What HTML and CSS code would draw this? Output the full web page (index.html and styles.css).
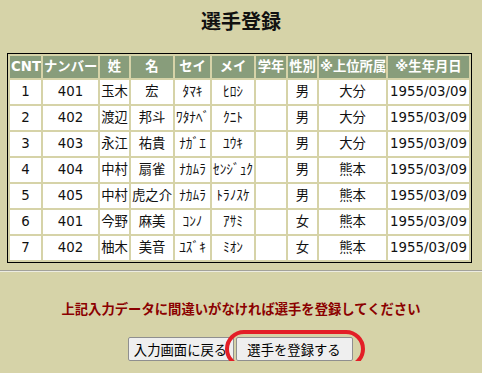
FILE: index.html
```html
<!DOCTYPE html>
<html lang="ja">
<head>
    <meta charset="UTF-8">
    <title>選手登録</title>
    <link rel="stylesheet" href="styles.css">
</head>
<body>

<!-- Page title -->
<h1 class="title">選手登録</h1>

<!-- Player list -->
<table class="players">
    <tr>
        <th class="c-cnt">CNT</th>
        <th class="c-num">ナンバー</th>
        <th class="c-sei">姓</th>
        <th class="c-mei">名</th>
        <th class="c-kana1">セイ</th>
        <th class="c-kana2">メイ</th>
        <th class="c-grade">学年</th>
        <th class="c-sex">性別</th>
        <th class="c-org">※上位所属</th>
        <th class="c-birth">※生年月日</th>
    </tr>
    <tr><td>1</td><td>401</td><td>玉木</td><td>宏</td><td>ﾀﾏｷ</td><td>ﾋﾛｼ</td><td></td><td>男</td><td>大分</td><td>1955/03/09</td></tr>
    <tr><td>2</td><td>402</td><td>渡辺</td><td>邦斗</td><td>ﾜﾀﾅﾍﾞ</td><td>ｸﾆﾄ</td><td></td><td>男</td><td>大分</td><td>1955/03/09</td></tr>
    <tr><td>3</td><td>403</td><td>永江</td><td>祐貴</td><td>ﾅｶﾞｴ</td><td>ﾕｳｷ</td><td></td><td>男</td><td>大分</td><td>1955/03/09</td></tr>
    <tr><td>4</td><td>404</td><td>中村</td><td>扇雀</td><td>ﾅｶﾑﾗ</td><td>ｾﾝｼﾞｭｸ</td><td></td><td>男</td><td>熊本</td><td>1955/03/09</td></tr>
    <tr><td>5</td><td>405</td><td>中村</td><td>虎之介</td><td>ﾅｶﾑﾗ</td><td>ﾄﾗﾉｽｹ</td><td></td><td>男</td><td>熊本</td><td>1955/03/09</td></tr>
    <tr><td>6</td><td>401</td><td>今野</td><td>麻美</td><td>ｺﾝﾉ</td><td>ｱｻﾐ</td><td></td><td>女</td><td>熊本</td><td>1955/03/09</td></tr>
    <tr><td>7</td><td>402</td><td>柚木</td><td>美音</td><td>ﾕｽﾞｷ</td><td>ﾐｵﾝ</td><td></td><td>女</td><td>熊本</td><td>1955/03/09</td></tr>
</table>

<hr class="rule">

<p class="notice">上記入力データに間違いがなければ選手を登録してください</p>

<!-- Actions -->
<div class="actions">
    <button class="btn btn-back">入力画面に戻る</button>
    <span class="mark">
        <button class="btn btn-submit">選手を登録する</button>
        <span class="circle"></span>
    </span>
</div>

</body>
</html>
```

FILE: styles.css
```css
body {
    margin: 0;
    background-color: #d6d3a8;
    font-family: "DejaVu Sans", "Noto Sans CJK JP", sans-serif;
    font-size: 13.33px;
    color: #111;
}
.title {
    margin: 0 0 20px;
    padding-top: 9px;
    font-family: "Noto Sans CJK JP", sans-serif;
    font-size: 20px;
    line-height: 24px;
    font-weight: bold;
    text-align: center;
}
.players {
    margin-left: 7px;
    width: 464px;
    table-layout: fixed;
    border: 1px solid #000;
    border-spacing: 2px;
}
.players th,
.players td {
    box-sizing: border-box;
    padding: 0 1px;
    text-align: center;
    white-space: nowrap;
    overflow: hidden;
}
.players th {
    height: 22px;
    line-height: 22px;
    background-color: #889d7b;
    color: #fff;
    font-weight: bold;
}
.players td {
    height: 24px;
    line-height: 24px;
    background-color: #fff;
}
.c-cnt { width: 31px; }
.c-num { width: 55px; }
.c-sei { width: 29px; }
.c-mei { width: 42px; }
.c-kana1 { width: 35px; }
.c-kana2 { width: 42px; }
.c-grade { width: 30px; }
.c-sex { width: 29px; }
.c-org { width: 67px; }
.c-birth { width: 81px; }
.rule {
    margin: 7px 0 0;
    border: none;
    border-top: 1px solid #a3a29a;
    border-bottom: 1px solid #ecebe0;
}
.notice {
    margin: 27px 0 0;
    font-family: "Noto Sans CJK JP", sans-serif;
    font-weight: bold;
    line-height: 20px;
    color: #8b0000;
    text-align: center;
}
.actions {
    display: flex;
    justify-content: center;
    gap: 2px;
    margin-top: 18px;
    padding-right: 2px;
}
.btn {
    height: 24px;
    padding: 0;
    border: 1px solid #8f8f8f;
    border-radius: 2px;
    background-color: #efefef;
    font-family: "Noto Sans CJK JP", sans-serif;
    font-size: 13.33px;
    color: #000;
}
.btn-back {
    width: 106px;
}
.btn-submit {
    width: 117px;
}
.mark {
    position: relative;
    display: flex;
}
.circle {
    position: absolute;
    top: -7px;
    right: -12px;
    bottom: -7px;
    left: -11px;
    border: 4px solid #e31e26;
    border-radius: 20px;
}
```
